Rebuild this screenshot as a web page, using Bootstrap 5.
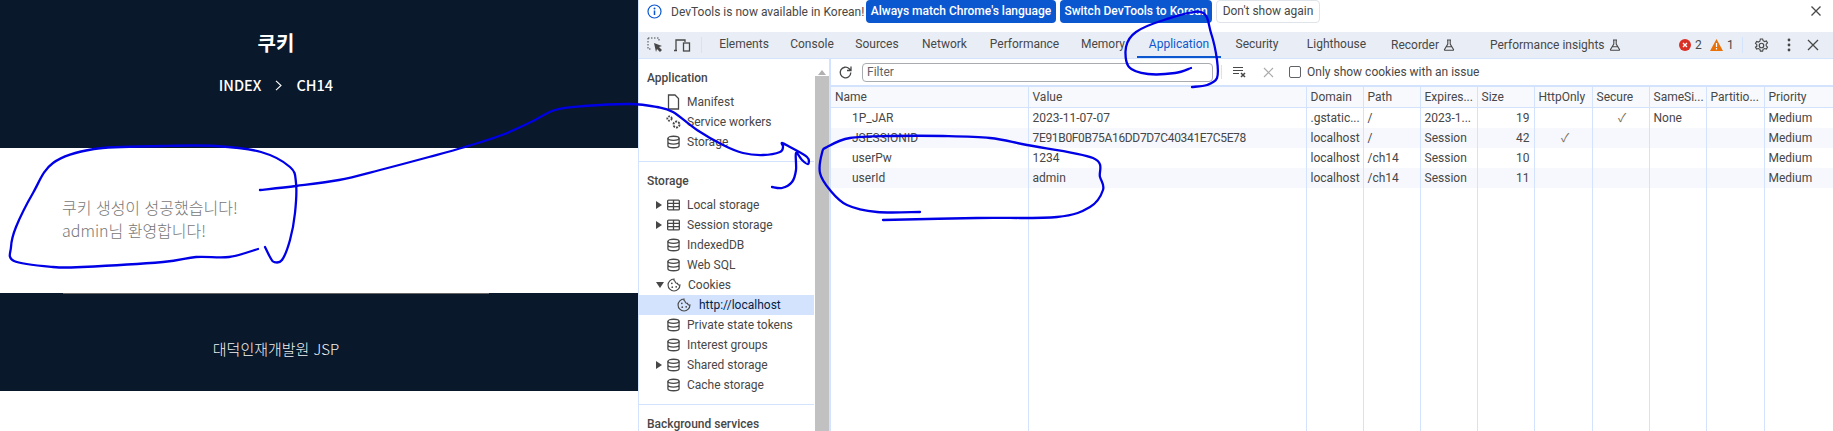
<!doctype html>
<html lang="ko"><head><meta charset="utf-8"><title>쿠키</title>
<link href="https://cdn.jsdelivr.net/npm/bootstrap@5.3.0/dist/css/bootstrap.min.css" rel="stylesheet">
<style>
html,body{height:431px;overflow:hidden;background:#fff}
body{position:relative;font-family:"Noto Sans CJK KR",sans-serif}
.page-left{width:638px;flex:none}
.inner-col{width:552px}
.hero-band{height:148px;background:#09182a;color:#fff;padding-top:28px}
.hero-title{font-size:20px;font-weight:700;line-height:30px;margin:0}
.crumbs{font-size:14.5px;font-weight:500;line-height:22px;margin-top:16px;gap:14px}
.msg-band{height:145px;padding:48px 62px 0;font-size:16px;font-weight:300;line-height:23px;color:#777}
.foot-band{height:98px;background:#09182a;color:#f1f3f5;position:relative;font-size:15px;font-weight:300;padding-top:44px;line-height:24px}
.foot-rule{height:1px;width:426px;background:#666;margin:0 0 0 63px;opacity:1;border:0;position:absolute;top:0;left:0}
.devtools{flex:1;min-width:0;font-family:Roboto,sans-serif;font-size:12px;color:#474747;border-left:1px solid #d3e3fd}
.infobar{height:32px;padding-left:8px;gap:4px;white-space:nowrap}
.infobar .info-text{width:196px;padding-left:5px}
.chip{font-size:12px;line-height:21px;padding:0;height:23px;border-radius:4px;font-weight:500}
.chip-blue{background:#0b57d0;border:0;color:#fff}
.chip-blue:hover{background:#0b57d0;color:#fff}
.chip-a{width:190px}.chip-b{width:152px}
.chip-c{width:104px;background:#fff;border:1px solid #dfe3ea;color:#474747;font-weight:400}
.close-x{margin-left:auto;margin-right:10px}
.tabstrip{height:27px;background:#e9eef6;border-bottom:1px solid #d3e3fd;display:grid;align-items:center;grid-template-columns:70px 70px 66px 64px 71px 89px 68px 84px 72px 87px 96px 175px 28px 31px 33px 36px 20px 28px 1fr;white-space:nowrap;text-align:center}
.tabstrip>div{height:26px;line-height:25px}
.tab-on{color:#0b57d0;border-bottom:2px solid #0b57d0;height:26px}
.tool-icons{padding-left:8px;display:flex;gap:10px;align-items:center;height:26px}
.thin-sep{width:1px;height:16px;background:#d3e3fd;flex:none}
.warn-cell .thin-sep{margin-left:auto}
.tab-rec{padding-left:11px}
.tab-ins{padding-left:14px}
.body-split{height:372px}
.side-pane{width:175px;flex:none;padding-top:9px}
.side-head{height:20px;line-height:20px;padding-left:8px;font-weight:500;margin-bottom:4px}
.side-row{height:20px;line-height:20px;display:flex;align-items:center;white-space:nowrap;padding-left:17px}
.side-row .tw{width:11px;flex:none;display:flex}
.side-row svg.ic{flex:none;margin-right:7px}
.side-row svg.ic.wide{margin-left:-2px;margin-right:5px}
.side-row.deep{padding-left:38px;background:#d3e3fd;color:#041e49}
.side-row.deep svg.ic{margin-right:8px}
.side-row.l2{padding-left:28px}
.side-rule{border-top:1px solid #d3e3fd;margin:9px 0 9px 0;opacity:1}
.scroll-col{width:14px;flex:none;background:#fff;margin-left:1px;display:flex;flex-direction:column;align-items:center}
.scroll-arrow{height:17px;padding-top:4px}
.scroll-thumb{flex:1;width:100%;background:#c1c1c1}
.main-pane{flex:1;min-width:0;border-left:2px solid #d3e3fd}
.filter-row{height:28px;border-bottom:2px solid #d3e3fd;display:flex;align-items:center;padding-left:7px}
.filter-box{width:351px;height:19px;margin-left:9px;border:1px solid #a8abb0;border-radius:4px;line-height:16px;padding-left:4px;color:#5f6368}
.filter-sep{width:1px;height:14px;background:#d3e3fd;margin:0 11px 0 8px}
.fake-check{width:12px;height:12px;border:1px solid #5f6368;border-radius:2px;margin:0 6px 0 15px}
.cookie-grid{table-layout:fixed;width:1003px;margin:0;border-collapse:collapse;font-size:12px;color:#474747;--bs-table-bg:transparent}
.cookie-grid th,.cookie-grid td{height:20px;padding:1px 1px 0 4px;line-height:19px;font-weight:400;white-space:nowrap;overflow:hidden;text-overflow:ellipsis;border:0;border-left:1px solid #d3e3fd;color:#474747;background:transparent;box-shadow:none}
.cookie-grid th:first-child,.cookie-grid td:first-child{border-left:0}
.cookie-grid thead tr{background:#f8f9fd;border-bottom:1px solid #d3e3fd}
.cookie-grid tbody tr.tint{background:#f6f8fd}
.cookie-grid td.nm{padding-left:21px}
.cookie-grid td.num{text-align:right;padding-right:4px}
.cookie-grid td.mid{text-align:center;color:#7d6f5c}
.cookie-grid td.hexval{letter-spacing:-.33px}
.cookie-grid td.filler{height:245px}
.ink-layer{position:absolute;left:0;top:0;pointer-events:none}
.ink-layer path{fill:none;stroke:#0000e6;stroke-width:2.300;stroke-linecap:round;stroke-linejoin:round}
</style></head>
<body>
<svg width="0" height="0" class="position-absolute">
<symbol id="db" viewBox="0 0 14 14"><g fill="none" stroke="#474747" stroke-width="1.400"><ellipse cx="7" cy="3" rx="6" ry="2.200"/><path d="M1 3v8c0 1.300 2.700 2.200 6 2.200s6-.9 6-2.200V3M1 7c0 1.300 2.700 2.200 6 2.200s6-.9 6-2.200"/></g></symbol>
<symbol id="gridi" viewBox="0 0 14 12"><g fill="none" stroke="#474747" stroke-width="1.400"><rect x=".7" y=".7" width="12.600" height="10.600" rx="1"/><path d="M.7 4.300h12.600M.7 7.800h12.600M7 .7v10.600"/></g></symbol>
<symbol id="cook" viewBox="0 0 16 16"><g fill="none" stroke="#474747" stroke-width="1.300"><path d="M8 1.200a6.800 6.800 0 1 0 6.800 6.800c-1.500.3-2.600-.5-2.800-1.800-1.500.1-2.800-.9-2.800-2.400C8.200 3.500 7.800 2.300 8 1.200z"/></g><g fill="#474747"><circle cx="5.500" cy="6" r="1"/><circle cx="6" cy="10.500" r="1"/><circle cx="10.500" cy="10" r="1"/></g></symbol>
<symbol id="flask" viewBox="0 0 12 12"><path d="M4 1h4M4.800 1v4L1.500 10.500c-.2.400 0 .8.500.8h8c.5 0 .7-.4.5-.8L7.200 5V1M3.400 7.800h5.200" fill="none" stroke="#474747" stroke-width="1.100"/></symbol>
</svg>
<div class="d-flex">
 <div class="page-left">
  <header class="hero-band"><div class="inner-col text-center">
    <h1 class="hero-title">쿠키</h1>
    <div class="crumbs d-flex justify-content-center align-items-center"><span>INDEX</span>
     <svg width="7" height="11" viewBox="0 0 7 11"><path d="M1 .8 6 5.500 1 10.200" fill="none" stroke="#fff" stroke-width="1.100"/></svg><span>CH14</span></div>
  </div></header>
  <section class="msg-band">쿠키 생성이 성공했습니다!<br>admin님 환영합니다!</section>
  <footer class="foot-band"><hr class="foot-rule"><div class="inner-col text-center">대덕인재개발원 JSP</div></footer>
 </div>
 <div class="devtools">
  <div class="infobar d-flex align-items-start">
    <svg class="mt-1" width="15" height="15" viewBox="0 0 15 15"><circle cx="7.500" cy="7.500" r="6.500" fill="none" stroke="#0b57d0" stroke-width="1.200"/><path d="M7.500 6.500v4.500" stroke="#0b57d0" stroke-width="1.500"/><circle cx="7.500" cy="4.500" r="1" fill="#0b57d0"/></svg>
    <span class="info-text lh-lg">DevTools is now available in Korean!</span>
    <button class="btn chip chip-blue chip-a">Always match Chrome's language</button>
    <button class="btn chip chip-blue chip-b">Switch DevTools to Korean</button>
    <button class="btn chip chip-c">Don't show again</button>
    <svg class="close-x mt-1" width="14" height="14" viewBox="0 0 14 14"><path d="M2.500 2.500l9 9m0-9l-9 9" stroke="#474747" stroke-width="1.300"/></svg>
  </div>
  <nav class="tabstrip">
    <div class="tool-icons">
     <svg width="16" height="16" viewBox="0 0 16 16"><path d="M1 1h11v4M1 1v11h4" fill="none" stroke="#474747" stroke-dasharray="1.500 1.500"/><path d="M7 6l8 3-3 1 3 3-2 2-3-3-1 3z" fill="#474747"/></svg>
     <svg width="18" height="15" viewBox="0 0 18 15"><path d="M1 12.500h3M3 12V2h9v2" fill="none" stroke="#474747" stroke-width="1.300"/><rect x="10.500" y="5" width="6" height="8" fill="none" stroke="#474747" stroke-width="1.300"/></svg>
     <span class="thin-sep"></span>
    </div>
    <div>Elements</div><div>Console</div><div>Sources</div><div>Network</div><div>Performance</div><div>Memory</div>
    <div class="tab-on">Application</div><div>Security</div><div>Lighthouse</div>
    <div class="tab-rec d-flex align-items-center gap-1">Recorder <svg width="12" height="12"><use href="#flask"/></svg></div>
    <div class="tab-ins d-flex align-items-center gap-1">Performance insights <svg width="12" height="12"><use href="#flask"/></svg></div>
    <div></div>
    <div class="d-flex align-items-center gap-1"><svg width="12" height="12" viewBox="0 0 12 12"><circle cx="6" cy="6" r="6" fill="#d93025"/><path d="M4 4l4 4m0-4l-4 4" stroke="#fff" stroke-width="1.300"/></svg>2</div>
    <div class="warn-cell d-flex align-items-center gap-1"><svg width="13" height="12" viewBox="0 0 13 12"><path d="M6.500 0 13 12H0z" fill="#e8710a"/><path d="M6.500 4v4m0 1v1.500" stroke="#fff" stroke-width="1.200"/></svg>1<span class="thin-sep"></span></div>
    <div class="d-flex align-items-center justify-content-center"><svg width="15" height="15" viewBox="0 0 16 16"><circle cx="8" cy="8" r="2.400" fill="none" stroke="#474747" stroke-width="1.300"/><path d="M6.800 1h2.400l.5 1.900 1.700.9 1.800-.6 1.200 2.100-1.400 1.300v1.800l1.400 1.300-1.200 2.100-1.800-.6-1.700.9-.5 1.900H6.800l-.5-1.900-1.700-.9-1.800.6L1.600 9.800 3 8.900V7.100L1.600 5.800l1.200-2.100 1.800.6 1.700-.9z" fill="none" stroke="#474747" stroke-width="1.200"/></svg></div>
    <div class="d-flex align-items-center justify-content-center"><svg width="4" height="14" viewBox="0 0 4 14"><g fill="#474747"><circle cx="2" cy="2" r="1.400"/><circle cx="2" cy="7" r="1.400"/><circle cx="2" cy="12" r="1.400"/></g></svg></div>
    <div class="d-flex align-items-center justify-content-center"><svg width="12" height="12" viewBox="0 0 12 12"><path d="M1 1l10 10m0-10L1 11" stroke="#474747" stroke-width="1.300"/></svg></div>
  </nav>
  <div class="body-split d-flex">
   <aside class="side-pane">
     <div class="side-head">Application</div>
     <div class="side-row l2"><svg class="ic" width="13" height="16" viewBox="0 0 13 16"><path d="M1.500 1h6.500l3.500 3.500V15h-10z" fill="none" stroke="#474747" stroke-width="1.300"/></svg>Manifest</div>
     <div class="side-row l2"><svg class="ic wide" width="17" height="16" viewBox="0 0 17 16"><g fill="none" stroke="#474747"><circle cx="4.500" cy="4.500" r="2.200" stroke-width="1.800" stroke-dasharray="1.700 1"/><circle cx="11.500" cy="10.500" r="3" stroke-width="2" stroke-dasharray="2 1.100"/></g></svg>Service workers</div>
     <div class="side-row l2"><svg class="ic" width="13" height="14"><use href="#db"/></svg>Storage</div>
     <div class="side-rule"></div>
     <div class="side-head">Storage</div>
     <div class="side-row"><span class="tw"><svg width="6" height="8"><path d="M0 0l6 4-6 4z" fill="#474747"/></svg></span><svg class="ic" width="13" height="12"><use href="#gridi"/></svg>Local storage</div>
     <div class="side-row"><span class="tw"><svg width="6" height="8"><path d="M0 0l6 4-6 4z" fill="#474747"/></svg></span><svg class="ic" width="13" height="12"><use href="#gridi"/></svg>Session storage</div>
     <div class="side-row l2"><svg class="ic" width="13" height="14"><use href="#db"/></svg>IndexedDB</div>
     <div class="side-row l2"><svg class="ic" width="13" height="14"><use href="#db"/></svg>Web SQL</div>
     <div class="side-row"><span class="tw"><svg width="8" height="6"><path d="M0 0h8L4 6z" fill="#474747"/></svg></span><svg class="ic" width="14" height="14"><use href="#cook"/></svg>Cookies</div>
     <div class="side-row deep"><svg class="ic" width="14" height="14"><use href="#cook"/></svg>http://localhost</div>
     <div class="side-row l2"><svg class="ic" width="13" height="14"><use href="#db"/></svg>Private state tokens</div>
     <div class="side-row l2"><svg class="ic" width="13" height="14"><use href="#db"/></svg>Interest groups</div>
     <div class="side-row"><span class="tw"><svg width="6" height="8"><path d="M0 0l6 4-6 4z" fill="#474747"/></svg></span><svg class="ic" width="13" height="14"><use href="#db"/></svg>Shared storage</div>
     <div class="side-row l2"><svg class="ic" width="13" height="14"><use href="#db"/></svg>Cache storage</div>
     <div class="side-rule"></div>
     <div class="side-head">Background services</div>
   </aside>
   <div class="scroll-col"><div class="scroll-arrow"><svg width="8" height="5"><path d="M4 0l4 5H0z" fill="#b0b0b0"/></svg></div><div class="scroll-thumb"></div></div>
   <main class="main-pane">
    <div class="filter-row">
      <svg width="15" height="15" viewBox="0 0 15 15"><path d="M12.800 7.500a5.300 5.300 0 1 1-1.600-3.800L13 5.500M13 1.500v4H9" fill="none" stroke="#474747" stroke-width="1.300"/></svg>
      <div class="filter-box">Filter</div>
      <div class="filter-sep"></div>
      <svg width="14" height="12" viewBox="0 0 14 12"><path d="M0 1.500h10M0 4.500h10M0 7.500h6" stroke="#474747" stroke-width="1.200"/><path d="M8 7l4 4m0-4l-4 4" stroke="#474747" stroke-width="1.500"/></svg>
      <svg class="ms-3" width="11" height="11" viewBox="0 0 11 11"><path d="M1 1l9 9m0-9l-9 9" stroke="#aaa" stroke-width="1.200"/></svg>
      <span class="fake-check"></span><span>Only show cookies with an issue</span>
    </div>
    <table class="table cookie-grid">
     <colgroup><col style="width:197px"><col style="width:278px"><col style="width:57px"><col style="width:57px"><col style="width:57px"><col style="width:57px"><col style="width:58px"><col style="width:57px"><col style="width:57px"><col style="width:58px"><col style="width:70px"></colgroup>
     <thead><tr><th>Name</th><th>Value</th><th>Domain</th><th>Path</th><th>Expires...</th><th>Size</th><th>HttpOnly</th><th>Secure</th><th>SameSi...</th><th>Partitio...</th><th>Priority</th></tr></thead>
     <tbody>
      <tr><td class="nm">1P_JAR</td><td>2023-11-07-07</td><td>.gstatic...</td><td>/</td><td>2023-1...</td><td class="num">19</td><td></td><td class="mid">✓</td><td>None</td><td></td><td>Medium</td></tr>
      <tr class="tint"><td class="nm">JSESSIONID</td><td class="hexval">7E91B0F0B75A16DD7D7C40341E7C5E78</td><td>localhost</td><td>/</td><td>Session</td><td class="num">42</td><td class="mid">✓</td><td></td><td></td><td></td><td>Medium</td></tr>
      <tr><td class="nm">userPw</td><td>1234</td><td>localhost</td><td>/ch14</td><td>Session</td><td class="num">10</td><td></td><td></td><td></td><td></td><td>Medium</td></tr>
      <tr class="tint"><td class="nm">userId</td><td>admin</td><td>localhost</td><td>/ch14</td><td>Session</td><td class="num">11</td><td></td><td></td><td></td><td></td><td>Medium</td></tr>
      <tr><td class="filler"></td><td></td><td></td><td></td><td></td><td></td><td></td><td></td><td></td><td></td><td></td></tr>
     </tbody>
    </table>
   </main>
  </div>
 </div>
</div>
<svg class="ink-layer" width="1833" height="431" viewBox="0 0 1833 431">
 <path data-p="258,249 229,257 196,257 163,262 82,267 53,267 14,261 11,247 16,227 33,193 53,163 94,149 163,146 216,146 261,152 290,167 296,183 295,213 290,240 282,260 274,262 270,257 265,247"/>
 <path data-p="260,190 296,186 339,180 380,170 429,157 465,147 502,135 531,122 555,110 584,106 630,104 657,107 673,112 697,130 723,145 743,153 763,155 780,152 783,147 782,143 790,147 807,157 808,164 802,160 796,153 796,170 792,182 782,188 772,187"/>
 <path data-p="1191,68 1175,73 1148,74 1129,67 1126,47 1136,32 1164,20 1201,12 1211,33 1217,60 1217,78 1207,85 1192,87"/>
 <path data-p="920,212 877,212 847,205 830,190 820,173 822,153 827,147 850,138 893,136 943,136 990,138 1027,145 1093,158 1100,177 1103,190 1090,207 1057,217 977,218 883,220"/>
</svg>
<script>
document.querySelectorAll('.ink-layer path').forEach(function(el){
  var p=el.getAttribute('data-p').split(' ').map(function(s){return s.split(',').map(Number)});
  var d='M'+p[0].join(' ');
  for(var i=0;i<p.length-1;i++){
    var a=p[Math.max(i-1,0)],b=p[i],c=p[i+1],e=p[Math.min(i+2,p.length-1)];
    d+='C'+(b[0]+(c[0]-a[0])/6)+' '+(b[1]+(c[1]-a[1])/6)+' '+(c[0]-(e[0]-b[0])/6)+' '+(c[1]-(e[1]-b[1])/6)+' '+c[0]+' '+c[1];
  }
  el.setAttribute('d',d);
});
</script>
<script src="https://cdn.jsdelivr.net/npm/bootstrap@5.3.0/dist/js/bootstrap.bundle.min.js"></script>
</body></html>
